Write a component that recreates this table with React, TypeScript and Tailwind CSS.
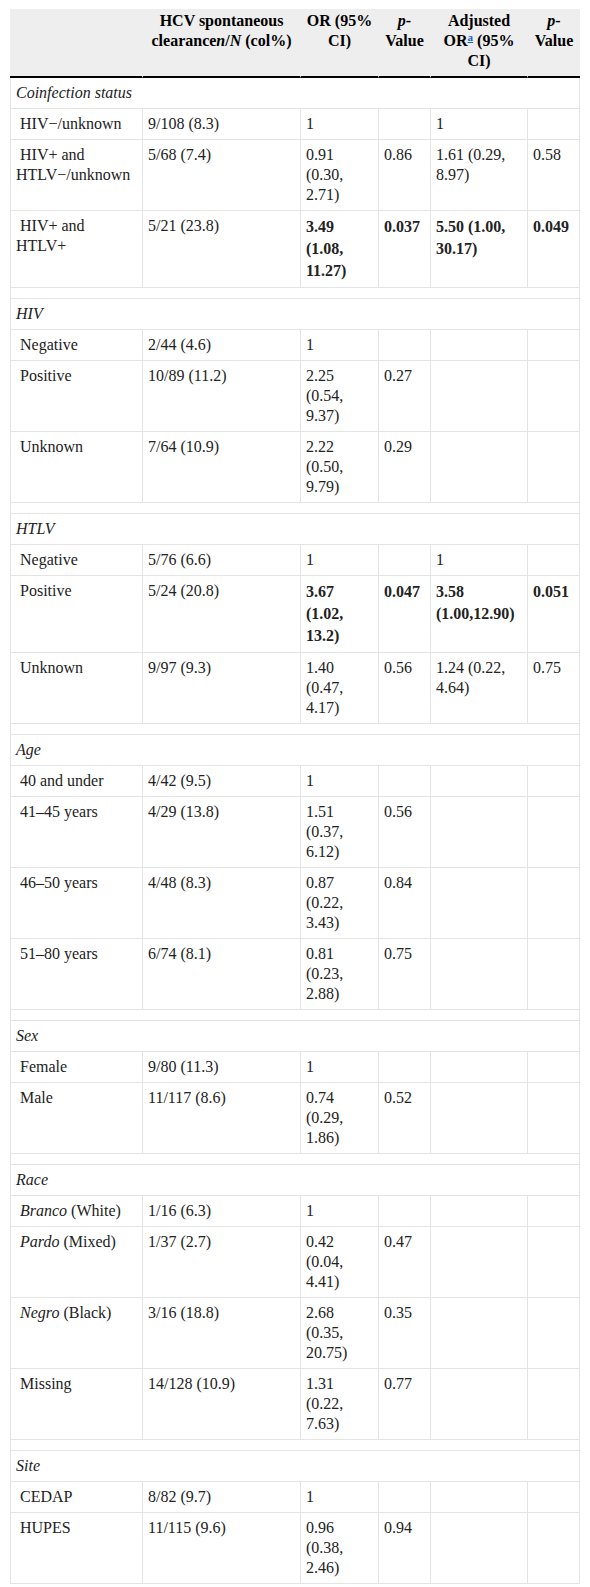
type Cell = { text: React.ReactNode; bold?: boolean };

interface Row {
  label: React.ReactNode;
  values: (string | Cell)[];
}

interface Section {
  title: string;
  rows: Row[];
}

const NB = "\u00a0";

const b = (text: string): Cell => ({ text, bold: true });

const sections: Section[] = [
  {
    title: "Coinfection status",
    rows: [
      { label: NB + "HIV\u2212/unknown", values: ["9/108 (8.3)", "1", "", "1", ""] },
      {
        label: NB + "HIV+ and HTLV\u2212/unknown",
        values: ["5/68 (7.4)", "0.91 (0.30, 2.71)", "0.86", "1.61 (0.29, 8.97)", "0.58"],
      },
      {
        label: NB + "HIV+ and HTLV+",
        values: ["5/21 (23.8)", b("3.49 (1.08, 11.27)"), b("0.037"), b("5.50 (1.00, 30.17)"), b("0.049")],
      },
    ],
  },
  {
    title: "HIV",
    rows: [
      { label: NB + "Negative", values: ["2/44 (4.6)", "1", "", "", ""] },
      { label: NB + "Positive", values: ["10/89 (11.2)", "2.25 (0.54, 9.37)", "0.27", "", ""] },
      { label: NB + "Unknown", values: ["7/64 (10.9)", "2.22 (0.50, 9.79)", "0.29", "", ""] },
    ],
  },
  {
    title: "HTLV",
    rows: [
      { label: NB + "Negative", values: ["5/76 (6.6)", "1", "", "1", ""] },
      {
        label: NB + "Positive",
        values: ["5/24 (20.8)", b("3.67 (1.02, 13.2)"), b("0.047"), b("3.58 (1.00,12.90)"), b("0.051")],
      },
      {
        label: NB + "Unknown",
        values: ["9/97 (9.3)", "1.40 (0.47, 4.17)", "0.56", "1.24 (0.22, 4.64)", "0.75"],
      },
    ],
  },
  {
    title: "Age",
    rows: [
      { label: NB + "40 and under", values: ["4/42 (9.5)", "1", "", "", ""] },
      { label: NB + "41\u201345 years", values: ["4/29 (13.8)", "1.51 (0.37, 6.12)", "0.56", "", ""] },
      { label: NB + "46\u201350 years", values: ["4/48 (8.3)", "0.87 (0.22, 3.43)", "0.84", "", ""] },
      { label: NB + "51\u201380 years", values: ["6/74 (8.1)", "0.81 (0.23, 2.88)", "0.75", "", ""] },
    ],
  },
  {
    title: "Sex",
    rows: [
      { label: NB + "Female", values: ["9/80 (11.3)", "1", "", "", ""] },
      { label: NB + "Male", values: ["11/117 (8.6)", "0.74 (0.29, 1.86)", "0.52", "", ""] },
    ],
  },
  {
    title: "Race",
    rows: [
      {
        label: (
          <>
            {NB}
            <i>Branco</i> (White)
          </>
        ),
        values: ["1/16 (6.3)", "1", "", "", ""],
      },
      {
        label: (
          <>
            {NB}
            <i>Pardo</i> (Mixed)
          </>
        ),
        values: ["1/37 (2.7)", "0.42 (0.04, 4.41)", "0.47", "", ""],
      },
      {
        label: (
          <>
            {NB}
            <i>Negro</i> (Black)
          </>
        ),
        values: ["3/16 (18.8)", "2.68 (0.35, 20.75)", "0.35", "", ""],
      },
      { label: NB + "Missing", values: ["14/128 (10.9)", "1.31 (0.22, 7.63)", "0.77", "", ""] },
    ],
  },
  {
    title: "Site",
    rows: [
      { label: NB + "CEDAP", values: ["8/82 (9.7)", "1", "", "", ""] },
      { label: NB + "HUPES", values: ["11/115 (9.6)", "0.96 (0.38, 2.46)", "0.94", "", ""] },
    ],
  },
];

const th =
  "bg-[#eeeeee] border-b-2 border-b-black border-r border-r-[#eeeeee] px-[5px] pt-[2px] pb-[5px] align-top text-center font-bold";
const td = "border-r border-b border-[#e4e4e4] px-[5px] py-[5px] align-top";

export default function App() {
  return (
    <div className="bg-white pt-[9px] pb-[10px] pl-[10px] font-['Liberation_Serif','Times_New_Roman',serif] text-[16px] leading-[20px] text-[#222]">
      <table className="w-[570px] table-fixed border-separate border-spacing-0">
        <colgroup>
          <col className="w-[133px]" />
          <col className="w-[158px]" />
          <col className="w-[78px]" />
          <col className="w-[52px]" />
          <col className="w-[97px]" />
          <col className="w-[52px]" />
        </colgroup>
        <thead className="text-black">
          <tr>
            <th className={th} />
            <th className={th}>
              HCV spontaneous clearance<i>n</i>/<i>N</i> (col%)
            </th>
            <th className={th}>OR (95% CI)</th>
            <th className={th}>
              <i>p</i>-Value
            </th>
            <th className={th}>
              Adjusted OR
              <sup className="text-[11px] leading-none text-[#1a5fd6] underline">a</sup> (95% CI)
            </th>
            <th className={th + " border-r-0"}>
              <i>p</i>-Value
            </th>
          </tr>
        </thead>
        <tbody>
          {sections.map((section, si) => (
            <SectionRows key={section.title} section={section} first={si === 0} />
          ))}
        </tbody>
      </table>
    </div>
  );
}

function SectionRows({ section, first }: { section: Section; first: boolean }) {
  return (
    <>
      {!first && (
        <tr>
          <td colSpan={6} className="h-[11px] border-l border-r border-b border-[#e4e4e4] p-0" />
        </tr>
      )}
      <tr>
        <td colSpan={6} className={td + " border-l italic"}>
          {section.title}
        </td>
      </tr>
      {section.rows.map((row, ri) => (
        <tr key={ri}>
          <td className={td + " border-l"}>{row.label}</td>
          {row.values.map((v, vi) => {
            const cell: Cell = typeof v === "string" ? { text: v } : v;
            return (
              <td
                key={vi}
                className={td + (cell.bold ? " font-bold leading-[22px]" : "")}
              >
                {cell.text}
              </td>
            );
          })}
        </tr>
      ))}
    </>
  );
}
